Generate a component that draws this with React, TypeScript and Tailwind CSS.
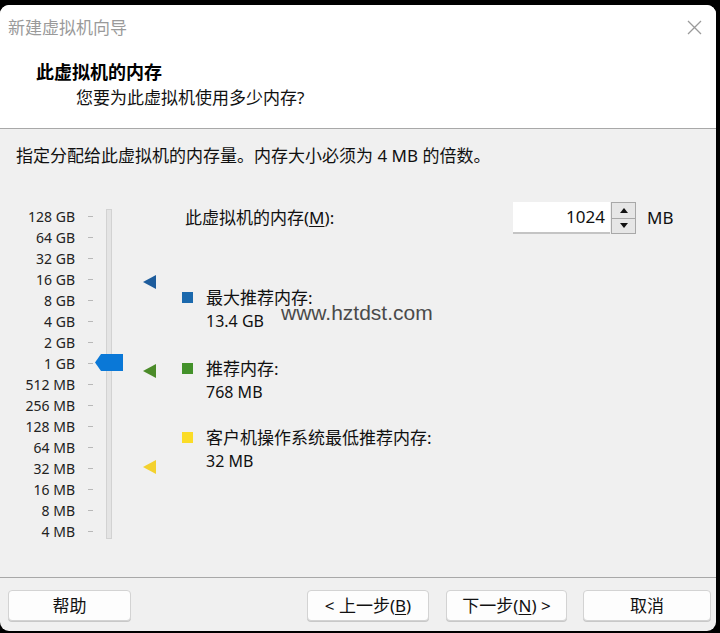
import React from "react";

const labels = [
  "128 GB", "64 GB", "32 GB", "16 GB", "8 GB", "4 GB", "2 GB", "1 GB",
  "512 MB", "256 MB", "128 MB", "64 MB", "32 MB", "16 MB", "8 MB", "4 MB",
];

function Tri({ color, top }: { color: string; top: number }) {
  return (
    <svg className="absolute left-[143px]" style={{ top }} width="13" height="14" viewBox="0 0 13 14">
      <polygon points="0,7 13,0 13,14" fill={color} />
    </svg>
  );
}

function Btn({ children, className = "" }: { children: React.ReactNode; className?: string }) {
  return (
    <div
      className={
        "h-[31px] rounded-[4px] border border-[#d3d3d3] bg-[#fdfdfd] shadow-[0_1px_0_#c8c8c8] flex items-center justify-center text-[17px] text-[#111] " +
        className
      }
    >
      {children}
    </div>
  );
}

export default function App() {
  return (
    <div
      className="w-[720px] h-[633px] bg-black overflow-hidden pt-[5px] pr-[4px]"
      style={{ fontFamily: '"Noto Sans", "Noto Sans CJK SC", sans-serif' }}
    >
      <div className="h-[626px] rounded-[9px] bg-[#f0f0f0] flex flex-col overflow-hidden relative">
        {/* header */}
        <div className="bg-white h-[124px] border-b border-[#a8a8a8] flex flex-col shrink-0">
          <div className="h-[44px] flex items-center justify-between pl-[8px] pr-[14px] pt-[1px]">
            <span className="text-[17px] text-[#9a9a9a] leading-none">新建虚拟机向导</span>
            <svg width="15" height="15" viewBox="0 0 15 15">
              <path d="M1 1 L14 14 M14 1 L1 14" stroke="#9a9a9a" strokeWidth="1.3" fill="none" />
            </svg>
          </div>
          <div className="pl-[36px] mt-[11px] text-[18px] font-bold leading-[24px] text-black">此虚拟机的内存</div>
          <div className="pl-[76px] mt-[2px] text-[17px] leading-[24px] text-[#111]">您要为此虚拟机使用多少内存?</div>
        </div>

        {/* body */}
        <div className="flex-1 flex flex-col pt-[15px] relative">
          <div className="pl-[16px] text-[17px] leading-[24px] text-[#111]">
            指定分配给此虚拟机的内存量。内存大小必须为 4 MB 的倍数。
          </div>

          <div className="flex mt-[38px]">
            {/* slider */}
            <div className="relative w-[182px] h-[336px] shrink-0">
              <div className="flex flex-col">
                {labels.map((l) => (
                  <div key={l} className="h-[21px] flex items-center">
                    <span className="w-[75px] text-right text-[14px] leading-none text-[#222]">{l}</span>
                    <span className="ml-[13px] w-[5px] h-px bg-[#b8b8b8]" />
                  </div>
                ))}
              </div>
              <div className="absolute left-[106px] top-[3px] w-[6px] h-[330px] bg-[#e4e4e4] border border-[#d2d2d2]" />
              <svg className="absolute left-[95px] top-[148px]" width="28" height="17" viewBox="0 0 28 17">
                <polygon points="0,8.5 6,0 28,0 28,17 6,17" fill="#0a78d7" />
              </svg>
              <Tri color="#1d5c9c" top={69} />
              <Tri color="#4b8b29" top={158} />
              <Tri color="#f3d12e" top={254} />
            </div>

            {/* right column */}
            <div className="flex flex-col">
              <div className="flex items-center h-[32px] mt-[-4px] pl-[3px]">
                <span className="w-[328px] text-[17px] text-[#111]">
                  此虚拟机的内存(<span className="underline underline-offset-2">M</span>):
                </span>
                <div className="w-[97px] h-[32px] bg-white border-b-2 border-[#c4c4c4] flex items-center justify-end pr-[5px] text-[17px] text-[#111]">
                  1024
                </div>
                <div className="w-[25px] h-[32px] ml-[1px] border border-[#a8a8a8] bg-[#e6e6e6] flex flex-col">
                  <div className="flex-1 border-b border-[#a8a8a8] flex items-center justify-center">
                    <svg width="8" height="5" viewBox="0 0 8 5"><polygon points="4,0 8,5 0,5" fill="#111" /></svg>
                  </div>
                  <div className="flex-1 flex items-center justify-center">
                    <svg width="8" height="5" viewBox="0 0 8 5"><polygon points="0,0 8,0 4,5" fill="#111" /></svg>
                  </div>
                </div>
                <span className="ml-[11px] text-[17px] text-[#111]">MB</span>
              </div>

              <div className="mt-[52px] flex">
                <div className="w-[11px] h-[11px] bg-[#1b69ad] mt-[6px]" />
                <div className="ml-[13px] text-[17px] leading-[23px] text-[#111]">
                  <div>最大推荐内存:</div>
                  <div className="text-[16px] mt-[1px]">13.4 GB</div>
                </div>
              </div>

              <div className="mt-[24px] flex">
                <div className="w-[11px] h-[11px] bg-[#43912a] mt-[6px]" />
                <div className="ml-[13px] text-[17px] leading-[23px] text-[#111]">
                  <div>推荐内存:</div>
                  <div className="text-[16px] mt-[1px]">768 MB</div>
                </div>
              </div>

              <div className="mt-[22px] flex">
                <div className="w-[11px] h-[11px] bg-[#fbdc27] mt-[6px]" />
                <div className="ml-[13px] text-[17px] leading-[23px] text-[#111]">
                  <div>客户机操作系统最低推荐内存:</div>
                  <div className="text-[16px] mt-[1px]">32 MB</div>
                </div>
              </div>
            </div>
          </div>

          <div
            className="absolute left-[281px] top-[173px] text-[21px] leading-none text-[#4a4a4a]"
            style={{ fontFamily: '"Liberation Sans", Arial, sans-serif' }}
          >
            www.hztdst.com
          </div>
        </div>

        {/* footer */}
        <div className="h-[54px] shrink-0 border-t border-[#a8a8a8] flex pt-[12px] pl-[8px] pr-[5px]">
          <Btn className="w-[123px]">帮助</Btn>
          <div className="flex-1" />
          <Btn className="w-[122px]">
            &lt; 上一步(<span className="underline underline-offset-2">B</span>)
          </Btn>
          <Btn className="w-[121px] ml-[17px]">
            下一步(<span className="underline underline-offset-2">N</span>) &gt;
          </Btn>
          <Btn className="w-[128px] ml-[16px]">取消</Btn>
        </div>
      </div>
    </div>
  );
}
